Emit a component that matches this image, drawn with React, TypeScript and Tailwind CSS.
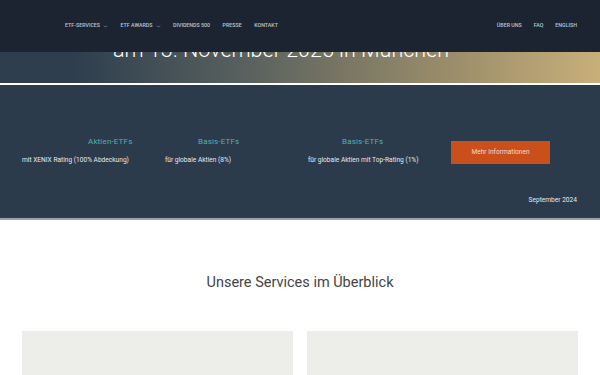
import { ChevronDown } from 'lucide-react';

const leftNav = [
  { label: 'ETF-Services', menu: true },
  { label: 'ETF Awards', menu: true },
  { label: 'Dividends 500', menu: false },
  { label: 'Presse', menu: false },
  { label: 'Kontakt', menu: false },
];

const rightNav = ['Über uns', 'FAQ', 'English'];

const stats = [
  { title: 'Aktien-ETFs', text: 'mit XENIX Rating (100% Abdeckung)', titleX: 'pl-[66px]' },
  { title: 'Basis-ETFs', text: 'für globale Aktien (8%)', titleX: 'pl-[33px]' },
  { title: 'Basis-ETFs', text: 'für globale Aktien mit Top-Rating (1%)', titleX: 'pl-[34px]' },
];

function Header() {
  return (
    <header className="absolute inset-x-0 top-0 z-10 flex h-[52px] items-center justify-between bg-[#1b2430] pl-[65px] pr-[23px] font-['Roboto',sans-serif] text-[5.3px] font-medium uppercase text-[#b9c5d1]">
      <nav className="flex items-center gap-[12.5px]">
        {leftNav.map((item) => (
          <span key={item.label} className="flex items-center gap-[3px]">
            {item.label}
            {item.menu && <ChevronDown className="h-[5px] w-[5px]" strokeWidth={2.5} />}
          </span>
        ))}
      </nav>
      <nav className="flex items-center gap-[12px]">
        {rightNav.map((label) => (
          <span key={label}>{label}</span>
        ))}
      </nav>
    </header>
  );
}

export default function App() {
  return (
    <div className="relative min-h-[375px] overflow-hidden bg-white font-['Roboto','Noto_Sans',sans-serif]">
      <Header />

      <section className="h-[83px] bg-[linear-gradient(to_right,#2e3e4e_12%,#57605e_40%,#9b8d6a_75%,#c7af7a_100%)] pl-[113px] pt-[38.5px]">
        <p className="text-[21.5px] font-light leading-none text-white">am 13. November 2025 in München</p>
      </section>

      <div className="h-[2px] bg-white" />

      <section className="relative h-[135px] border-b-2 border-[#9aa3ab] bg-[#2c3b4b] text-white">
        <div className="flex pl-[22px] pt-[53px]">
          {stats.map((s, i) => (
            <div key={i} className={i === 2 ? 'w-[130px]' : 'w-[143px]'}>
              <p className={`${s.titleX} text-[8px] leading-none tracking-[0.02em] text-[#4fb0b6]`}>{s.title}</p>
              <p className="mt-[11px] text-[6.6px] leading-none text-[#e6eaee]">{s.text}</p>
            </div>
          ))}
          <div className="ml-[13px] mt-[3px] flex h-[23px] w-[99px] items-center justify-center bg-[#c94f1b] text-[6.6px] text-[#f6dccd]">
            Mehr Informationen
          </div>
        </div>
        <p className="absolute right-[23px] top-[112px] text-[6.6px] leading-none text-[#e6eaee]">September 2024</p>
      </section>

      <section className="pt-[56px]">
        <h2 className="text-center text-[14.5px] leading-none text-[#444]">Unsere Services im Überblick</h2>
        <div className="mt-[40px] grid grid-cols-2 gap-[14px] px-[22px]">
          <div className="h-[80px] bg-[#ededea]" />
          <div className="h-[80px] bg-[#ededea]" />
        </div>
      </section>
    </div>
  );
}
